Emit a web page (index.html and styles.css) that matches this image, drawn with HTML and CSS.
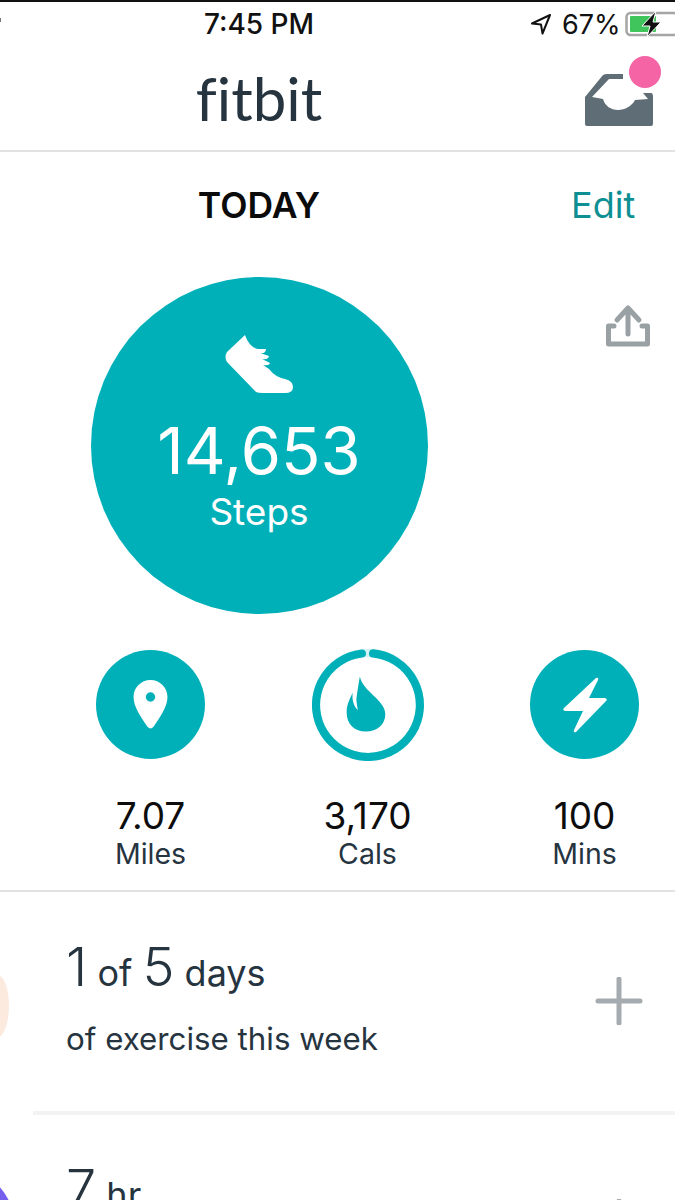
FILE: index.html
```html
<!DOCTYPE html>
<html lang="en">
<head>
    <meta charset="UTF-8">
    <title>fitbit</title>
    <link rel="stylesheet" href="styles.css">
</head>

<body>
<div class="wrap">
    <div class="status">
        <span class="edge-mark"></span>
        <span class="time">7:45 PM</span>
        <div class="status-right">
            <svg class="loc" viewBox="0 0 22 22"><path d="M20 2 2 10.5l9 1 1.5 9z" fill="none" stroke="#111" stroke-width="2" stroke-linejoin="round"/></svg>
            <span>67%</span>
            <svg class="batt" viewBox="0 0 50 26">
                <rect x="1.5" y="2" width="51" height="22" rx="4" fill="#fff" stroke="#a5a5a5" stroke-width="2.5"/>
                <rect x="5" y="5" width="26" height="16" rx="1" fill="#3fc55b"/>
                <path d="M31 0 17 15h8l-3 11 14-15h-8z" fill="#111" stroke="#fff" stroke-width="1"/>
            </svg>
        </div>
    </div>

    <div class="header">
        <div class="logo">fitbit</div>
        <svg class="inbox" viewBox="0 0 76 72">
            <path d="M0 41 18 19Q20 18 22 18H38V23H24L7 41 18 43C20 50 26 54 33 54 40 54 47 50 50 44L63 43 58 37H66Q68 37 68 41V68Q68 70 66 70H2Q0 70 0 68Z" fill="#5f6d76"/>
            <circle cx="60" cy="16" r="16" fill="#f564a4"/>
        </svg>
    </div>

    <div class="today-row">
        <div class="today">TODAY</div>
        <div class="edit">Edit</div>
    </div>

    <div class="hero">
        <div class="hero-main">
            <div class="steps">
                <svg class="shoe" viewBox="0 0 68 58">
                    <path d="M20 0 2 17Q-1 22 2 27L31 57Q33 58 38 58H60Q68 58 68 52 68 46 60 44 50 42 44 34L38 30Q44 31 45 28L37 24Q43 25 44 21L35 18Q41 19 41 14L33 14Q24 12 20 0Z" fill="#fff"/>
                </svg>
                <div class="steps-num">14,653</div>
                <div class="steps-lbl">Steps</div>
            </div>
        </div>
        <svg class="share" viewBox="0 0 48 48">
            <path d="M24 33V8M13 19 24 7l11 12M10 25H4.500V43h39V25H38" fill="none" stroke="#9aa1a5" stroke-width="5" stroke-linecap="round" stroke-linejoin="round"/>
        </svg>
    </div>

    <div class="stats">
        <div class="stat">
            <div class="stat-ico solid">
                <svg viewBox="0 0 36 52" class="pin"><path fill-rule="evenodd" d="M18 0C8 0 0 8 0 18c0 11 9 23 15 32q3 3 6 0c6-9 15-21 15-32C36 8 28 0 18 0zm0 13a5 5 0 1 1 0 10 5 5 0 0 1 0-10z" fill="#fff"/></svg>
            </div>
            <div class="stat-num">7.07</div>
            <div class="stat-lbl">Miles</div>
        </div>
        <div class="stat">
            <div class="stat-ico">
                <svg viewBox="0 0 110 110" class="ring">
                    <circle cx="55" cy="55" r="51" fill="none" stroke="#d4f2f4" stroke-width="8"/>
                    <path d="M60 4.300A51 51 0 1 1 49 4.400" fill="none" stroke="#00b0b9" stroke-width="8" stroke-linecap="round"/>
                    <path d="M47 27C50 42 72 50 72 64 72 74 64 81 53 81 42 81 34 74 34 62 34 55 37 49 40 43 39 50 41 56 45 60 44 54 43 50 44 46 45 38 46 33 47 27Z" fill="#00b0b9"/>
                </svg>
            </div>
            <div class="stat-num">3,170</div>
            <div class="stat-lbl">Cals</div>
        </div>
        <div class="stat">
            <div class="stat-ico solid">
                <svg viewBox="0 0 44 56" class="bolt"><path d="M33 1Q36 0 35 3L26 21H42Q45 22 43 24L13 55Q10 56 11 53L20 34H2Q-1 33 1 31Z" fill="#fff"/></svg>
            </div>
            <div class="stat-num">100</div>
            <div class="stat-lbl">Mins</div>
        </div>
    </div>

    <div class="card">
        <span class="peek peek-peach"></span>
        <div class="card-text">
            <div class="card-title"><span class="big">1</span> of <span class="big">5</span> days</div>
            <div class="card-sub">of exercise this week</div>
        </div>
        <svg class="plus" viewBox="0 0 48 48"><path d="M24 2v44M3 24h42" stroke="#a5abaf" stroke-width="5" stroke-linecap="round"/></svg>
    </div>

    <div class="card card2">
        <span class="peek peek-purple"></span>
        <div class="card-title"><span class="big">7</span> hr</div>
        <svg class="plus plus2" viewBox="0 0 48 48"><path d="M24 2v44M3 24h42" stroke="#a5abaf" stroke-width="5" stroke-linecap="round"/></svg>
    </div>
</div>
</body>
</html>
```

FILE: styles.css
```css
* { margin: 0; padding: 0; box-sizing: border-box; }
html, body { background-color: #fff; }
body { width: 675px; height: 1200px; overflow: hidden; font-family: "Inter", "Liberation Sans", sans-serif; }
.wrap { width: 675px; height: 1200px; overflow: hidden; border-top: 2px solid #111; }

/*status bar*/
.status { position: relative; height: 48px; padding-bottom: 4px; display: grid; grid-template-columns: 518px 1fr; align-items: center; font-size: 27px; color: #111; }
.edge-mark { position: absolute; left: 0; top: 16px; width: 1px; height: 4px; background-color: #777; }
.time { text-align: center; font-size: 28px; font-weight: 500; }
.status-right { display: flex; align-items: center; padding-left: 12px; white-space: nowrap; }
.loc { width: 22px; height: 22px; margin-right: 10px; }
.batt { width: 50px; height: 26px; margin-left: 4px; flex: none; }

/*header*/
.header { height: 102px; border-bottom: 2px solid #e2e2e2; display: grid; grid-template-columns: 518px 1fr; align-items: start; }
.logo { text-align: center; font-family: "Lato", sans-serif; font-size: 60px; color: #26343f; line-height: 1; padding-top: 18px; font-variant-ligatures: none; }
.inbox { width: 76px; height: 72px; margin: 6px 0 0 67px; }

.today-row { height: 106px; display: grid; grid-template-columns: 518px 1fr; align-items: center; }
.today { text-align: center; font-size: 35.5px; font-weight: 600; color: #0b0b0b; }
.edit { font-size: 36px; color: #0e8f94; padding-left: 53px; }

/*steps*/
.hero { display: grid; grid-template-columns: 518px 1fr; padding-top: 19px; }
.hero-main { display: flex; justify-content: center; }
.steps { width: 337px; height: 337px; border-radius: 50%; background-color: #00b0b9; color: #fff; display: flex; flex-direction: column; align-items: center; padding-top: 58px; }
.shoe { width: 68px; height: 58px; flex: none; }
.steps-num { font-size: 65px; line-height: 70px; margin-top: 23px; font-weight: 400; }
.steps-lbl { font-size: 37px; line-height: 40px; margin-top: 6px; }
.share { width: 48px; height: 48px; margin-left: 86px; margin-top: 24px; }

/*three small stats*/
.stats { display: grid; grid-template-columns: repeat(3, 217px); padding: 36px 0 0 42px; height: 278px; border-bottom: 2px solid #e2e2e2; }
.stat { display: flex; flex-direction: column; align-items: center; }
.stat-ico { width: 109px; height: 109px; display: flex; align-items: center; justify-content: center; border-radius: 50%; }
.stat-ico.solid { background-color: #00b0b9; }
.pin { width: 35px; height: 49px; }
.ring { width: 112px; height: 112px; flex: none; }
.bolt { width: 44px; height: 56px; }
.stat-num { font-size: 37px; line-height: 42px; margin-top: 36px; color: #0d0d0d; }
.stat-lbl { font-size: 28.5px; line-height: 34px; color: #26343f; }

/*cards*/
.card { position: relative; height: 219px; display: flex; align-items: center; justify-content: space-between; padding: 0 32px 8px 66px; }
.card-title { font-size: 36px; color: #26343f; line-height: 60px; }
.card-title .big { font-size: 54px; font-weight: 300; }
.card-sub { font-size: 31.3px; color: #26343f; line-height: 40px; margin-top: 16px; }
.plus { width: 48px; height: 48px; flex: none; margin-top: 6px; }
.plus2 { margin-top: 40px; }
.card2 { border-top: 4px solid #f3f3f3; margin-left: 33px; padding: 44px 32px 0 33px; align-items: flex-start; }
.peek { position: absolute; border-radius: 50%; }
.peek-peach { left: -14px; top: 83px; width: 23px; height: 62px; background-color: #fdeadf; }
.peek-purple { left: -138px; top: 52px; width: 120px; height: 120px; background-color: #7560ee; }
```
